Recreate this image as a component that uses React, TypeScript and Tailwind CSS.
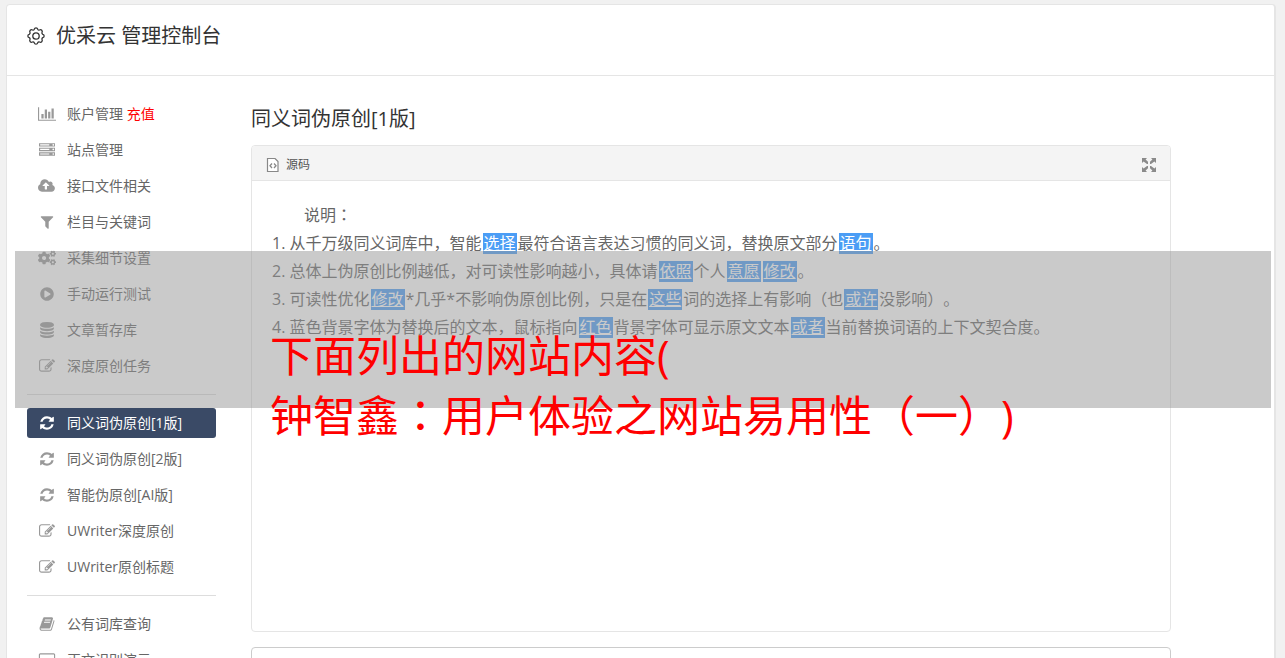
import { ReactNode } from "react"
import { FaCogs, FaPlayCircle } from "react-icons/fa"

type GlyphProps = {
  d: string;
  wide?: boolean;
};

function Glyph({ d, wide }: GlyphProps) {
  return (
    <svg viewBox={wide ? "0 0 2048 1792" : "0 0 1792 1792"} className={wide ? "w-[18px] h-4" : "w-4 h-4"} fill="currentColor" fillRule="evenodd" aria-hidden="true">
      <path d={d} />
    </svg>
  )
}

const chart = "M640 896v512h-256v-512h256zm384-512v1024h-256v-1024h256zm1024 1152v128h-2048v-1536h128v1408h1920zm-640-896v768h-256v-768h256zm384-384v1152h-256v-1152h256z"
const server = "M128 1408h1024v-128h-1024v128zm0-512h1024v-128h-1024v128zm1568 448q0-40-28-68t-68-28-68 28-28 68 28 68 68 28 68-28 28-68zm-1568-960h1024v-128h-1024v128zm1568 448q0-40-28-68t-68-28-68 28-28 68 28 68 68 28 68-28 28-68zm0-512q0-40-28-68t-68-28-68 28-28 68 28 68 68 28 68-28 28-68zm96 832v384h-1792v-384h1792zm0-512v384h-1792v-384h1792zm0-512v384h-1792v-384h1792z"
const cloud = "M1280 864q0-14-9-23l-352-352q-9-9-23-9t-23 9l-351 351q-10 12-10 24 0 14 9 23t23 9h224v352q0 13 9.5 22.5t22.5 9.5h192q13 0 22.5-9.5t9.5-22.5v-352h224q13 0 22.5-9.5t9.5-22.5zm640 288q0 159-112.5 271.5t-271.5 112.5h-1088q-185 0-316.5-131.5t-131.5-316.5q0-130 70-240t188-165q-2-30-2-43 0-212 150-362t362-150q156 0 285.5 87t188.5 231q71-62 166-62 106 0 181 75t75 181q0 76-41 138 130 31 213.5 135.5t83.5 238.5z"
const filter = "M1595 295q17 41-14 70l-493 493v742q0 42-39 59-13 5-25 5-27 0-45-19l-256-256q-19-19-19-45v-486l-493-493q-31-29-14-70 17-39 59-39h1280q42 0 59 39z"
const database = "M896 768q237 0 443-43t325-127v170q0 69-103 128t-280 93.5-385 34.5-385-34.5-280-93.5-103-128v-170q119 84 325 127t443 43zm0 768q237 0 443-43t325-127v170q0 69-103 128t-280 93.5-385 34.5-385-34.5-280-93.5-103-128v-170q119 84 325 127t443 43zm0-384q237 0 443-43t325-127v170q0 69-103 128t-280 93.5-385 34.5-385-34.5-280-93.5-103-128v-170q119 84 325 127t443 43zm0-1152q208 0 385 34.5t280 93.5 103 128v128q0 69-103 128t-280 93.5-385 34.5-385-34.5-280-93.5-103-128v-128q0-69 103-128t280-93.5 385-34.5z"
const edit = "M888 1184l116-116-152-152-116 116v56h96v96h56zm440-720q-16-16-33 1l-350 350q-17 17-1 33t33-1l350-350q17-17 1-33zm80 594v190q0 119-84.5 203.5t-203.5 84.5h-832q-119 0-203.5-84.5t-84.5-203.5v-832q0-119 84.5-203.5t203.5-84.5h832q63 0 117 25 15 7 18 23 3 17-9 29l-49 49q-14 14-32 8-23-6-45-6h-832q-66 0-113 47t-47 113v832q0 66 47 113t113 47h832q66 0 113-47t47-113v-126q0-13 9-22l64-64q15-15 35-7t20 29zm-96-738l288 288-672 672h-288v-288zm444 132l-92 92-288-288 92-92q28-28 68-28t68 28l152 152q28 28 28 68t-28 68z"
const refresh = "M1639 1056q0 5-1 7-64 268-268 434.5t-478 166.5q-146 0-282.5-55t-243.5-157l-129 129q-19 19-45 19t-45-19-19-45v-448q0-26 19-45t45-19h448q26 0 45 19t19 45-19 45l-137 137q71 66 161 102t187 36q134 0 250-65t186-179q11-17 53-117 8-23 30-23h192q13 0 22.5 9.5t9.5 22.5zm25-800v448q0 26-19 45t-45 19h-448q-26 0-45-19t-19-45 19-45l138-138q-148-137-349-137-134 0-250 65t-186 179q-11 17-53 117-8 23-30 23h-199q-13 0-22.5-9.5t-9.5-22.5v-7q65-268 270-434.5t480-166.5q146 0 284 55.5t245 156.5l130-129q19-19 45-19t45 19 19 45z"
const book = "M1703 478q40 57 18 129l-275 906q-19 64-76.5 107.5t-122.5 43.5h-923q-77 0-148.5-53.5t-99.5-131.5q-24-67-2-127 0-4 3-27t4-37q1-8-3-21.5t-3-19.5q2-11 8-21t16.5-23.5 16.5-23.5q23-38 45-91.5t30-91.5q3-10 .5-30t-.5-28q3-11 17-28t17-23q21-36 42-92t25-90q1-9-2.5-32t.5-28q4-13 22-30.5t22-22.5q19-26 42.5-84.5t27.5-96.5q1-8-3-25.5t-2-26.5q2-8 9-18t18-23 17-21q8-12 16.5-30.5t15-35 16-36 19.5-32 26.5-23.5 36-11.5 47.5 5.5l-1 3q38-9 51-9h761q74 0 114 56t18 130l-274 906q-36 119-71.5 153.5t-128.5 34.5h-869q-27 0-38 15-11 16-1 43 24 70 144 70h923q29 0 56-15.5t35-41.5l300-987q7-22 5-57 38 15 59 43zm-1064 2q-4 13 2 22.5t20 9.5h608q13 0 25.5-9.5t16.5-22.5l21-64q4-13-2-22.5t-20-9.5h-608q-13 0-25.5 9.5t-16.5 22.5zm-83 256q-4 13 2 22.5t20 9.5h608q13 0 25.5-9.5t16.5-22.5l21-64q4-13-2-22.5t-20-9.5h-608q-13 0-25.5 9.5t-16.5 22.5z"
const laptop = "M256 128h1536q66 0 113 47t47 113v1024q0 66-47 113t-113 47h-1536q-66 0-113-47t-47-113v-1024q0-66 47-113t113-47zm0 128q-32 0-32 32v1024q0 32 32 32h1536q32 0 32-32v-1024q0-32-32-32z"

type MenuItemProps = {
  icon: ReactNode;
  active?: boolean;
  children: ReactNode;
};

function MenuItem({ icon, active, children }: MenuItemProps) {
  return (
    <li className={active ? "mb-[6px] rounded-[3px] bg-[#3a4a66] text-white" : "mb-[6px] text-[#666]"}>
      <a href="#" className="flex items-center gap-[10px] h-[30px] pl-[10px] text-[14px] leading-5">
        <span className={active ? "flex w-5 shrink-0 justify-center" : "flex w-5 shrink-0 justify-center text-[#999]"}>{icon}</span>
        <span className="whitespace-nowrap">{children}</span>
      </a>
    </li>
  )
}

function Divider() {
  return <li className="mt-[13px] mb-[13px] h-px bg-[#ddd]" role="separator"></li>
}

function Sidebar() {
  return (
    <nav className="w-[189px] shrink-0 pt-[23px]">
      <ul>
        <MenuItem icon={<Glyph d={chart} wide />}>账户管理 <span className="text-[#f00]">充值</span></MenuItem>
        <MenuItem icon={<Glyph d={server} />}>站点管理</MenuItem>
        <MenuItem icon={<Glyph d={cloud} wide />}>接口文件相关</MenuItem>
        <MenuItem icon={<Glyph d={filter} />}>栏目与关键词</MenuItem>
        <MenuItem icon={<FaCogs className="w-[18px] h-4" />}>采集细节设置</MenuItem>
        <MenuItem icon={<FaPlayCircle className="w-[14px] h-[14px]" />}>手动运行测试</MenuItem>
        <MenuItem icon={<Glyph d={database} />}>文章暂存库</MenuItem>
        <MenuItem icon={<Glyph d={edit} />}>深度原创任务</MenuItem>
        <Divider />
        <MenuItem icon={<Glyph d={refresh} />} active>同义词伪原创[1版]</MenuItem>
        <MenuItem icon={<Glyph d={refresh} />}>同义词伪原创[2版]</MenuItem>
        <MenuItem icon={<Glyph d={refresh} />}>智能伪原创[AI版]</MenuItem>
        <MenuItem icon={<Glyph d={edit} />}>UWriter深度原创</MenuItem>
        <MenuItem icon={<Glyph d={edit} />}>UWriter原创标题</MenuItem>
        <Divider />
        <MenuItem icon={<Glyph d={book} />}>公有词库查询</MenuItem>
        <MenuItem icon={<Glyph d={laptop} wide />}>正文识别演示</MenuItem>
      </ul>
    </nav>
  )
}

function Word({ children }: { children: ReactNode }) {
  return <a href="#" className="inline-block mx-px px-px bg-[#4b9df5] text-white leading-[21px] underline">{children}</a>
}

// colon centred in its full-width cell
function Colon() {
  return <span className="leading-none font-['Noto_Sans_CJK_JP',sans-serif]">：</span>
}

function Editor() {
  return (
    <section className="rounded-[4px] border border-[#e5e5e5]">
      <div className="flex items-center justify-between h-[35px] px-[14px] pt-1 rounded-t-[3px] border-b border-[#e5e5e5] bg-[#f4f4f4]">
        <button type="button" className="flex items-center gap-[6px] text-[12px] leading-4 text-[#555]">
          <svg viewBox="0 0 14 14" className="w-[14px] h-[14px]" fill="none" stroke="#888" aria-hidden="true">
            <path d="M1.500 .5h7.500l3 3v10H1.500V0" fill="#fff" strokeWidth="1.200" />
            <path d="M6 5.500L4 7.800L6 10M8 5.500L10 7.800L8 10" strokeWidth="1.3" />
          </svg>
          源码
        </button>
        <button type="button" aria-label="全屏">
          <svg viewBox="0 0 14 14" className="w-[14px] h-[14px]" fill="#8a8a8a" aria-hidden="true">
            <path d="M0 0h5L3.600 1.400 6 3.800V6H5L1.600 3.400 0 5zM14 0v5l-1.600-1.600L9 6H8V3.800l2.400-2.400L9 0zM0 14V9l1.600 1.600L5 8h1v2.200l-2.400 2.400L5 14zM14 14H9l1.400-1.400L8 10.200V8h1l3.400 2.600L14 9z" />
          </svg>
        </button>
      </div>
      <div className="min-h-[450px] p-5 text-[16px] leading-7 text-[#666]">
        <p className="pl-8">说明<Colon /></p>
        <p>1. 从千万级同义词库中，智能<Word>选择</Word>最符合语言表达习惯的同义词，替换原文部分<Word>语句</Word>。</p>
        <p>2. 总体上伪原创比例越低，对可读性影响越小，具体请<Word>依照</Word>个人<Word>意愿</Word><Word>修改</Word>。</p>
        <p>3. 可读性优化<Word>修改</Word>*几乎*不影响伪原创比例，只是在<Word>这些</Word>词的选择上有影响（也<Word>或许</Word>没影响）。</p>
        <p>4. 蓝色背景字体为替换后的文本，鼠标指向<Word>红色</Word>背景字体可显示原文文本<Word>或者</Word>当前替换词语的上下文契合度。</p>
      </div>
    </section>
  )
}

function App() {
  return (
    <div className="relative pt-1 pl-[6px] pr-[9px] bg-[#f1f1f1] [text-spacing-trim:space-all] font-['Open_Sans','Noto_Sans_CJK_SC',sans-serif]">
      <div className="rounded-t-[4px] border border-r-2 border-[#e5e5e5] bg-white">
        <header className="flex items-center gap-[11px] h-[71px] px-5 pb-[9px] border-b border-[#e5e5e5] text-[#333]">
          <svg viewBox="0 0 18 18" className="w-[18px] h-[18px]" fill="none" stroke="currentColor" strokeWidth="1.3" strokeLinejoin="round" aria-hidden="true">
            <path d="M7.300 2.200A1.750 1.750 0 0 1 10.700 2.200A1.600 1.600 0 0 0 12.600 3A1.750 1.750 0 0 1 15 5.400A1.600 1.600 0 0 0 15.800 7.300A1.750 1.750 0 0 1 15.800 10.700A1.600 1.600 0 0 0 15 12.600A1.750 1.750 0 0 1 12.600 15A1.600 1.600 0 0 0 10.700 15.800A1.750 1.750 0 0 1 7.300 15.800A1.600 1.600 0 0 0 5.400 15A1.750 1.750 0 0 1 3 12.600A1.600 1.600 0 0 0 2.200 10.700A1.750 1.750 0 0 1 2.200 7.300A1.600 1.600 0 0 0 3 5.400A1.750 1.750 0 0 1 5.400 3A1.600 1.600 0 0 0 7.300 2.200z" />
            <circle cx="9" cy="9" r="3.200" />
          </svg>
          <h1 className="text-[20px] leading-[30px]">优采云 管理控制台</h1>
        </header>
        <div className="flex gap-[35px] pl-5 pr-[103px]">
          <Sidebar />
          <main className="flex-1 min-w-0 pt-7">
            <h2 className="mb-[11px] text-[20px] leading-[30px] text-[#333]">同义词伪原创[1版]</h2>
            <Editor />
            <textarea aria-label="原文" className="block w-full h-[200px] mt-[15px] p-3 rounded-[4px] border border-[#ccc] resize-none text-[14px]"></textarea>
          </main>
        </div>
      </div>
      <div className="absolute top-[251px] left-[15px] right-[14px] h-[157px] pt-[75px] pl-[255px] bg-[#969696]/50">
        <p className="text-[43px] leading-[60px] text-[#f00] whitespace-nowrap">
          下面列出的网站内容(<br />
          钟智鑫<Colon />用户体验之网站易用性（一）)
        </p>
      </div>
    </div>
  )
}

export default App
